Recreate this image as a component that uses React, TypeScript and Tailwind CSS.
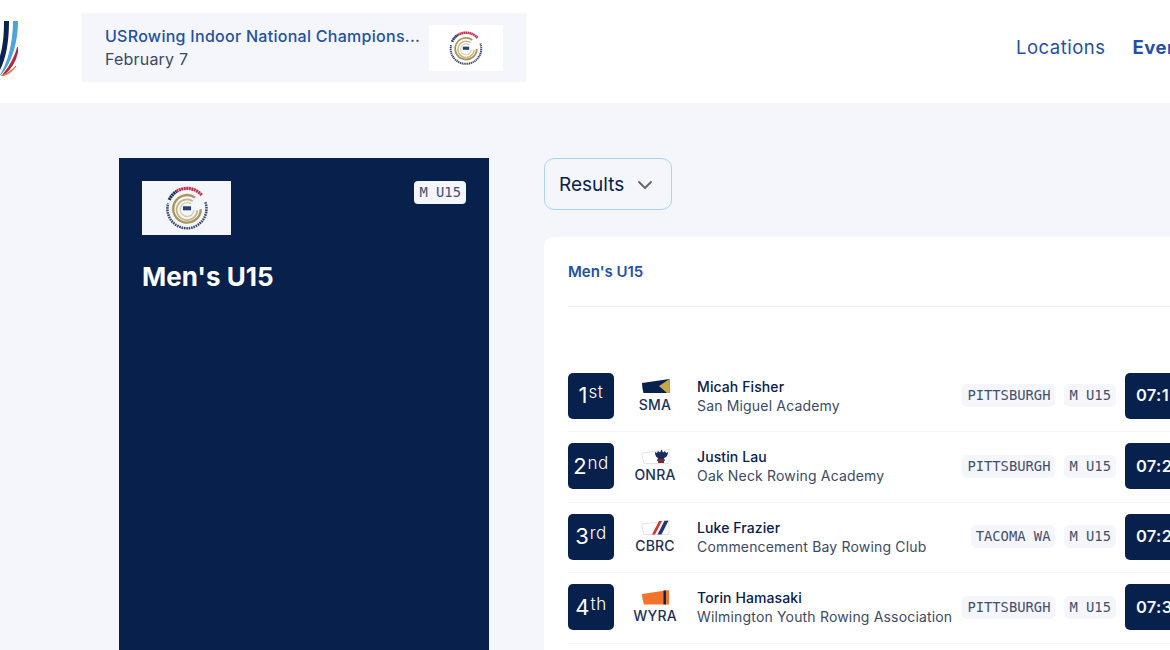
import { ChevronDown } from 'lucide-react';
import type { ReactNode } from 'react';

const font = { fontFamily: 'Inter, sans-serif' };

function Seal({ size }: { size: number }) {
  return (
    <svg width={size} height={size} viewBox="0 0 40 40" fill="none">
      <path d="M11 5.500 A17 17 0 0 1 33 9" stroke="#c2324f" strokeWidth="2.800" strokeDasharray="1.800 .4" />
      <path d="M4.500 13 A17 17 0 0 1 11 5.500" stroke="#1c2f5e" strokeWidth="2.800" strokeDasharray="1.800 .4" />
      <path d="M36 15 A17 17 0 1 1 3.600 16" stroke="#33456f" strokeWidth="2.200" strokeDasharray="1.400 .7" />
      <path d="M27 11 A12 12 0 1 0 32 21" stroke="#a8955a" strokeWidth="2" />
      <path d="M25 14 A9 9 0 1 0 29 22" stroke="#c4b687" strokeWidth="1.600" />
      <path d="M23.500 16.500 A6 6 0 1 0 26 22" stroke="#d6cca9" strokeWidth="1.200" />
      <rect x="16.500" y="18.500" width="7" height="3.500" fill="#2b3d7b" />
    </svg>
  );
}

function Tag({ children }: { children: ReactNode }) {
  return (
    <span className="flex h-[23px] items-center rounded-[5px] bg-[#f4f6fb] px-[5px] font-['DejaVu_Sans_Mono',monospace] text-[13.800px] text-[#43516d]">
      {children}
    </span>
  );
}

const blades: Record<string, ReactNode> = {
  SMA: (
    <svg width="29" height="15" viewBox="0 0 29 15">
      <path d="M1 4 L28.500 0 V14 H2.500 Q1 9 1 4Z" fill="#07204c" />
      <path d="M28.500 0 V14 H26 L18 7 Z" fill="#c7a648" />
    </svg>
  ),
  ONRA: (
    <svg width="29" height="15" viewBox="0 0 29 15">
      <path d="M1 4 L28 .5 V14.500 H3 Q1 9 1 4Z" fill="#fff" stroke="#d5d8de" strokeWidth=".7" />
      <path d="M14 3 L16 4 L17 2 L19 3.500 L20.500 .5 L22 3.500 L24 2 L25 4 L27 3 Q27 8 23 9 L24 12 H16 L17 9 Q14 8 14 3Z" fill="#1c2a5c" />
      <path d="M17 10 H23 V14 H17Z" fill="#7a2a30" />
    </svg>
  ),
  CBRC: (
    <svg width="29" height="15" viewBox="0 0 29 15">
      <path d="M1 4 L28 .5 V14.500 H3 Q1 9 1 4Z" fill="#fff" stroke="#d5d8de" strokeWidth=".7" />
      <path d="M11 14.500 L18 1 H21 L14 14.500Z" fill="#d7332f" />
      <path d="M16.500 14.500 L23.500 .8 H27.500 L20.500 14.500Z" fill="#24356f" />
    </svg>
  ),
  WYRA: (
    <svg width="29" height="15" viewBox="0 0 29 15">
      <path d="M1 4 L28 0 V14.500 H3 Q1 9 1 4Z" fill="#f0742b" />
      <rect x="22.500" y="0.500" width="2.500" height="14" fill="#15206b" />
    </svg>
  ),
};

const rows = [
  { rank: '1', suf: 'st', code: 'SMA', name: 'Micah Fisher', club: 'San Miguel Academy', city: 'PITTSBURGH', time: '07:1' },
  { rank: '2', suf: 'nd', code: 'ONRA', name: 'Justin Lau', club: 'Oak Neck Rowing Academy', city: 'PITTSBURGH', time: '07:2' },
  { rank: '3', suf: 'rd', code: 'CBRC', name: 'Luke Frazier', club: 'Commencement Bay Rowing Club', city: 'TACOMA WA', time: '07:2' },
  { rank: '4', suf: 'th', code: 'WYRA', name: 'Torin Hamasaki', club: 'Wilmington Youth Rowing Association', city: 'PITTSBURGH', time: '07:3' },
];

export default function App() {
  return (
    <div className="h-[650px] w-[1170px] overflow-hidden bg-[#f4f6fb]" style={font}>
      <header className="flex h-[103px] items-center bg-white pb-[8px]">
        <svg className="shrink-0" width="18" height="56" viewBox="0 0 18 56">
          <path d="M4 1 H9 C9 22 6 38 0 50 V36 C3 26 4 14 4 1Z" fill="#0b2350" />
          <path d="M13 1 H18 C18 24 11 44 1 55 H0 C8 42 13 22 13 1Z" fill="#4fa3dc" />
          <path d="M18 27 C17 38 12 48 3 55 C10 47 15 38 18 27Z" fill="#b02a3e" stroke="#b02a3e" strokeWidth="1.500" />
          <path d="M16 46 C12 52 7 55 1 56 C7 54 11 51 16 46Z" fill="#ee6a45" stroke="#ee6a45" />
        </svg>
        <div className="ml-16 flex h-[69px] w-[444px] shrink-0 items-center justify-between bg-[#f4f6fb] px-[23px]">
          <div className="-mt-[2px]">
            <div className="whitespace-nowrap text-[16px] font-medium leading-[24px] tracking-[0.28px] text-[#2350a5]">USRowing Indoor National Champions...</div>
            <div className="text-[16px] leading-[22px] tracking-[0.2px] text-[#3a4a66]">February 7</div>
          </div>
          <div className="flex h-[46px] w-[74px] shrink-0 items-center justify-center bg-white">
            <Seal size={36} />
          </div>
        </div>
        <nav className="ml-[490px] flex shrink-0 gap-[27px] text-[18.500px] tracking-[0.5px] text-[#2350a5]">
          <a>Locations</a>
          <a className="font-bold">Events</a>
        </nav>
      </header>

      <main className="flex gap-[55px] pl-[119px] pt-[55px]">
        <aside className="h-[500px] w-[370px] shrink-0 bg-[#07204c] px-[23px] pt-[23px]">
          <div className="flex items-start justify-between">
            <div className="flex h-[54px] w-[89px] items-center justify-center bg-[#f4f6fb]">
              <Seal size={46} />
            </div>
            <span className="flex h-[23px] items-center rounded-[4px] bg-[#f4f6fb] px-[5px] font-['DejaVu_Sans_Mono',monospace] text-[13.800px] text-[#43516d]">
              M U15
            </span>
          </div>
          <h1 className="mt-[24px] text-[26px] font-bold leading-[36px] text-white">Men's U15</h1>
        </aside>

        <section className="w-[697px] shrink-0">
          <button className="flex h-[52px] w-[128px] items-center gap-[9px] rounded-[10px] border border-[#a9d3f3] pb-[-1px] pl-[14px] pt-[2px] text-[19px] text-[#07204c]">
            Results
            <ChevronDown size={24} strokeWidth={1.800} className="text-[#5b6472]" />
          </button>
          <div className="mt-[27px] h-[420px] rounded-t-[9px] bg-white px-6">
            <div className="flex h-[70px] items-center border-b border-[#eef2f8] pt-[2px] text-[15px] font-semibold text-[#2350a5]">Men's U15</div>
            <div className="pt-[54.500px]">
              {rows.map((r) => (
                <div key={r.rank} className="flex h-[70.500px] items-center border-b border-[#f4f5f8] pb-px">
                  <div className="flex h-[46px] w-[46px] shrink-0 items-center justify-center rounded-[5px] bg-[#07204c] text-[22px] text-white">
                    <span>
                      {r.rank}
                      <sup className="-top-[5px] ml-px text-[17px] font-light tracking-[0.5px]">{r.suf}</sup>
                    </span>
                  </div>
                  <div className="ml-[16px] flex w-[50px] shrink-0 flex-col items-center">
                    {blades[r.code]}
                    <span className="mt-[3px] text-[14px] font-medium leading-[16px] tracking-[0.2px] text-[#1b3059]">{r.code}</span>
                  </div>
                  <div className="ml-[17px] min-w-0">
                    <div className="text-[14px] font-medium leading-[19px] tracking-[0.1px] text-[#07204c]">{r.name}</div>
                    <div className="whitespace-nowrap text-[14px] leading-[19px] tracking-[0.17px] text-[#3a4a66]">{r.club}</div>
                  </div>
                  <div className="ml-auto flex items-center gap-[9px]">
                    <Tag>{r.city}</Tag>
                    <Tag>M U15</Tag>
                  </div>
                  <div className="ml-[9px] flex h-[46px] w-[92px] shrink-0 items-center rounded-[5px] bg-[#07204c] pl-[11px] text-[16.500px] font-semibold tracking-[0.3px] text-[#f4f6fb]">
                    {r.time}
                  </div>
                </div>
              ))}
            </div>
          </div>
        </section>
      </main>
    </div>
  );
}
